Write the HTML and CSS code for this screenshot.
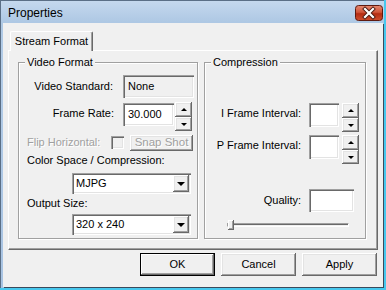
FILE: index.html
```html
<!DOCTYPE html>
<html>
<head>
<meta charset="utf-8">
<link rel="stylesheet" href="styles.css">
</head>
<body>
<div class="window">
  <div class="titlebar">
    <span class="title">Properties</span>
    <svg class="close-btn" width="28" height="16" viewBox="0 0 28 16">
      <defs>
        <linearGradient id="cg" x1="0" y1="0" x2="0" y2="1">
          <stop offset="0" stop-color="#e58a72"/>
          <stop offset="0.45" stop-color="#d0553a"/>
          <stop offset="0.55" stop-color="#b42c12"/>
          <stop offset="1" stop-color="#cf4e2e"/>
        </linearGradient>
      </defs>
      <rect x="0.5" y="0.5" width="27" height="15" rx="3" ry="3" fill="url(#cg)" stroke="#5e1a10"/>
      <path d="M10 4 L18 12 M18 4 L10 12" stroke="#4a1a12" stroke-width="4" stroke-linecap="square" fill="none"/>
      <path d="M10 4 L18 12 M18 4 L10 12" stroke="#ffffff" stroke-width="2.2" stroke-linecap="square" fill="none"/>
    </svg>
  </div>
  <div class="client">
    <div class="tabs"><div class="tab">Stream Format</div></div>
    <div class="panel">
      <div class="group video">
        <span class="legend">Video Format</span>
        <div class="row r1">
          <span class="lbl w94">Video Standard:</span>
          <div class="static sunken">None</div>
        </div>
        <div class="row r2">
          <span class="lbl w95">Frame Rate:</span>
          <div class="edit sunken fr">30.000</div>
          <div class="spin"><div class="sb up"><i class="tri-up"></i></div><div class="sb down"><i class="tri-down"></i></div></div>
        </div>
        <div class="row r3">
          <span class="lbl-left dis">Flip Horizontal:</span>
          <span class="check sunken"></span>
          <div class="btn snap dis">Snap Shot</div>
        </div>
        <div class="text">Color Space / Compression:</div>
        <div class="combo sunken c1"><span class="val">MJPG</span><span class="drop"><i class="tri-down"></i></span></div>
        <div class="text t2">Output Size:</div>
        <div class="combo sunken c2"><span class="val">320 x 240</span><span class="drop"><i class="tri-down"></i></span></div>
      </div>
      <div class="group comp">
        <span class="legend">Compression</span>
        <div class="row ri">
          <span class="lbl w96 lh21">I Frame Interval:</span>
          <div class="edit sunken iv"></div>
          <div class="spin"><div class="sb up"><i class="tri-up"></i></div><div class="sb down"><i class="tri-down"></i></div></div>
        </div>
        <div class="row rp">
          <span class="lbl w96 lh21">P Frame Interval:</span>
          <div class="edit sunken iv"></div>
          <div class="spin"><div class="sb up"><i class="tri-up"></i></div><div class="sb down"><i class="tri-down"></i></div></div>
        </div>
        <div class="row rq">
          <span class="lbl w96 lh23">Quality:</span>
          <div class="edit sunken qv"></div>
        </div>
        <div class="slider"><div class="track"></div><div class="thumb"></div></div>
      </div>
    </div>
    <div class="buttons">
      <div class="btn big def">OK</div>
      <div class="btn big">Cancel</div>
      <div class="btn big">Apply</div>
    </div>
  </div>
</div>
</body>
</html>
```
FILE: styles.css
```css
html, body { margin: 0; padding: 0; }
body {
  width: 386px; height: 290px; overflow: hidden;
  font-family: "Liberation Sans", Arial, sans-serif;
  font-size: 11px; color: #000;
}
.window {
  position: relative;
  width: 386px; height: 290px; box-sizing: border-box;
  background: linear-gradient(#c6d9ee, #aec8e4 22px, #b3cce7 60px, #a8c3e2);
  padding: 0 3px 3px 3px;
  display: flex; flex-direction: column;
  box-shadow: inset -2px -2px 0 #47c8ee, inset 0 0 0 1px #5b6f86;
}
.titlebar {
  height: 23px; flex: none;
  display: flex; align-items: flex-start; justify-content: space-between;
}
.title {
  font-size: 12px; margin: 6px 0 0 5px; color: #000;
  font-family: "Liberation Sans", Arial, sans-serif;
}
.close-btn { display: block; margin-top: 5px; flex: none; }
.client {
  flex: 1; background: #f0f0f0;
  position: relative;
  box-shadow: 1px 1px 0 #3b4a5c;
}
.tabs { padding: 8px 0 0 7px; height: 19px; position: relative; z-index: 2; }
.tab {
  width: 83px; height: 20px; box-sizing: border-box;
  background: #f0f0f0;
  border-top: 1px solid #fff; border-left: 1px solid #fff;
  border-right: 1px solid #696969;
  box-shadow: inset -1px 0 #a0a0a0;
  border-radius: 2px 2px 0 0;
  text-align: center; line-height: 18px;
}
.panel {
  position: relative;
  margin-left: 5px; width: 370px; height: 200px; box-sizing: border-box;
  border-top: 1px solid #fff; border-left: 1px solid #fff;
  border-right: 1px solid #696969; border-bottom: 1px solid #696969;
  box-shadow: inset -1px -1px #a0a0a0;
  padding: 11px 0 0 9px;
  display: flex; align-items: flex-start; gap: 6px;
}
.group {
  position: relative; box-sizing: border-box;
  border: 1px solid #a0a0a0;
  box-shadow: inset 1px 1px #fff, 1px 1px #fff;
  height: 177px;
  display: flex; flex-direction: column; align-items: flex-start;
}
.video { width: 180px; }
.comp { width: 162px; }
.legend {
  position: absolute; top: -7px; left: 6px;
  background: #f0f0f0; padding: 0 2px; line-height: 13px;
}
.row { display: flex; align-items: flex-start; }
.lbl { text-align: right; white-space: nowrap; flex: none; }
.w94 { width: 94px; line-height: 23px; }
.w95 { width: 95px; line-height: 23px; }
.w96 { width: 96px; }
.lh21 { line-height: 21px; }
.lh23 { line-height: 23px; }
.sunken {
  box-sizing: border-box;
  box-shadow: inset 1px 1px #a0a0a0, inset 2px 2px #696969, inset -1px -1px #fff, inset -2px -2px #e3e3e3;
}
.r1 { margin-top: 12px; height: 23px; }
.static {
  margin-left: 10px; width: 71px; height: 23px;
  background: #f0f0f0; padding-left: 5px; line-height: 23px;
}
.r2 { margin-top: 4px; height: 29px; }
.edit { background: #fff; }
.fr { margin: 1px 0 0 9px; width: 51px; height: 23px; padding-left: 5px; line-height: 23px; }
.spin { margin-left: 1px; width: 17px; display: flex; flex-direction: column; }
.sb {
  box-sizing: border-box; width: 17px; background: #f0f0f0;
  box-shadow: inset -1px -1px #696969, inset 1px 1px #fff, inset -2px -2px #a0a0a0, inset 2px 2px #e3e3e3;
  display: flex; align-items: center; justify-content: center;
}
.sb.up { height: 15px; }
.sb.down { height: 14px; }
.tri-up {
  display: block; width: 0; height: 0;
  border-left: 3px solid transparent; border-right: 3px solid transparent;
  border-bottom: 3px solid #000;
}
.tri-down {
  display: block; width: 0; height: 0;
  border-left: 3px solid transparent; border-right: 3px solid transparent;
  border-top: 3px solid #000;
}
.r3 { margin-top: 4px; height: 15px; }
.lbl-left { width: 84px; padding-left: 8px; line-height: 15px; white-space: nowrap; }
.dis { color: #a0a0a0; text-shadow: 1px 1px 0 #fff; }
.check { width: 13px; height: 13px; margin-top: 1px; background: #f0f0f0; flex: none; }
.btn {
  box-sizing: border-box; background: #f0f0f0; text-align: center;
  box-shadow: inset -1px -1px #696969, inset 1px 1px #fff, inset -2px -2px #a0a0a0, inset 2px 2px #e3e3e3;
}
.snap { margin-left: 6px; width: 63px; height: 16px; line-height: 15px; font-size: 11.5px; }
.text { margin-top: 4px; padding-left: 8px; line-height: 13px; }
.t2 { margin-top: 3px; }
.combo {
  margin-left: 53px; width: 119px; height: 21px; background: #fff;
  display: flex; align-items: stretch; padding: 2px;
}
.c1 { margin-top: 6px; }
.c2 { margin-top: 4px; }
.combo .val { flex: 1; padding-left: 2px; line-height: 17px; }
.drop {
  width: 16px; background: #f0f0f0; box-sizing: border-box;
  box-shadow: inset -1px -1px #696969, inset 1px 1px #fff, inset -2px -2px #a0a0a0, inset 2px 2px #e3e3e3;
  display: flex; align-items: center; justify-content: center;
}
.drop .tri-down { border-left-width: 4px; border-right-width: 4px; border-top-width: 4px; }
.ri { margin-top: 40px; height: 29px; }
.rp { margin-top: 3px; height: 29px; }
.iv { margin-left: 8px; width: 30px; height: 24px; }
.ri .spin, .rp .spin { margin-left: 3px; }
.rq { margin-top: 25px; height: 23px; }
.qv { margin-left: 8px; width: 45px; height: 23px; }
.slider { position: relative; margin: 8px 0 0 22px; width: 122px; height: 10px; }
.track {
  position: absolute; left: 0; right: 0; top: 3px; height: 4px; box-sizing: border-box;
  border-top: 1px solid #a0a0a0; border-left: 1px solid #a0a0a0;
  border-bottom: 1px solid #fff; border-right: 1px solid #fff;
  box-shadow: inset 1px 1px #696969;
}
.thumb {
  position: absolute; left: 1px; top: 0; width: 6px; height: 10px; box-sizing: border-box;
  background: #f0f0f0;
  box-shadow: inset -1px -1px #696969, inset 1px 1px #fff, inset -2px -2px #a0a0a0;
}
.buttons {
  margin-top: 3px; display: flex; justify-content: flex-end; gap: 6px; padding-right: 6px;
}
.big { width: 75px; height: 23px; line-height: 23px; }
.def {
  box-shadow: inset 0 0 0 1px #000, inset -2px -2px #696969, inset 2px 2px #fff, inset -3px -3px #a0a0a0;
}
```
